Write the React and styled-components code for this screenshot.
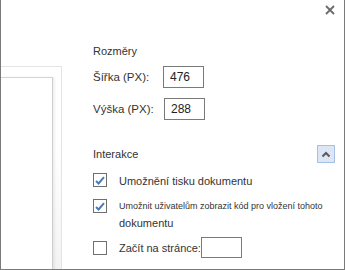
import React from 'react';
import styled, { createGlobalStyle } from 'styled-components';

const GlobalStyle = createGlobalStyle`
    html, body {
        margin: 0;
        padding: 0;
        background: #fff;
    }
    body {
        font-family: "Liberation Sans", Arial, sans-serif;
        color: #333;
    }
`;

const Window = styled.div`
    position: relative;
    width: 345px;
    height: 270px;
    box-sizing: border-box;
    border: 1px solid #7a7a7a;
    border-top: none;
    background: #fff;
    display: flex;
    overflow: hidden;
`;

const CloseButton = styled.button`
    position: absolute;
    top: 4px;
    right: 8px;
    width: 12px;
    height: 12px;
    padding: 0;
    border: none;
    background: none;
    display: flex;
    align-items: center;
    justify-content: center;
`;

const Preview = styled.div`
    width: 60px;
    margin-top: 66px;
    border-top: 1px solid #e4e4e4;
    border-right: 1px solid #e4e4e4;
    background: linear-gradient(to bottom, #fff 0%, #fff 40%, #f3f3f3 100%);
`;

const PreviewPage = styled.div`
    height: 100%;
    margin-top: 10px;
    margin-right: 8px;
    background: #fff;
    border-top: 1px solid #d4d4d4;
    border-right: 1px solid #cfcfcf;
    box-shadow: 2px 0 2px rgba(0, 0, 0, 0.06);
`;

const Settings = styled.div`
    flex: 1;
    margin-left: 31px;
    padding-top: 44px;
    padding-right: 9px;
    display: flex;
    flex-direction: column;
    font-size: 11px;
`;

const SectionTitle = styled.div`
    height: 14px;
    line-height: 14px;
    color: #333;
`;

const FieldRow = styled.label`
    display: flex;
    align-items: center;
    height: 22px;
    margin-top: ${p => p.$top}px;
    font-size: 11.5px;
    color: #333;
`;

const FieldLabel = styled.span`
    width: ${p => p.$width}px;
`;

const NumberInput = styled.input`
    box-sizing: border-box;
    width: ${p => p.$width || 41}px;
    height: ${p => p.$height || 22}px;
    border: 1px solid #7a7a7a;
    padding: 0 0 0 6px;
    font-family: "Liberation Sans", Arial, sans-serif;
    font-size: 12px;
    color: #222;
    background: #fff;
    outline: none;
`;

const SectionHeader = styled.div`
    display: flex;
    align-items: center;
    justify-content: space-between;
    height: 18px;
    margin-top: 25px;
`;

const CollapseButton = styled.button`
    box-sizing: border-box;
    width: 18px;
    height: 18px;
    padding: 0;
    background: #dce6f5;
    border: 1px solid #a6bfe4;
    display: flex;
    align-items: center;
    justify-content: center;
`;

const CheckRow = styled.div`
    display: flex;
    align-items: flex-start;
    margin-top: ${p => p.$top}px;
`;

const Box = styled.span`
    box-sizing: border-box;
    flex: none;
    width: 14px;
    height: 14px;
    border: 1px solid #707070;
    background: #fff;
    display: flex;
    align-items: center;
    justify-content: center;
`;

const CheckLabel = styled.div`
    margin-left: 12px;
    color: #333;
    font-size: 11px;
    line-height: 14px;
    margin-top: ${p => p.$shift || 0}px;
`;

const SmallLine = styled.div`
    font-size: 9px;
    line-height: 12px;
`;

const WrappedLine = styled.div`
    margin-top: 4px;
`;

const InlineRow = styled.div`
    display: flex;
    align-items: center;
    margin-top: -4px;
`;

function Check({ checked }) {
    return (
        <Box>
            {checked && (
                <svg width="10" height="9" viewBox="0 0 10 9">
                    <path d="M1 5 L3.6 7.5 L9 1.2" fill="none" stroke="#4a7bb8" strokeWidth="2" />
                </svg>
            )}
        </Box>
    );
}

export default function App() {
    return (
        <>
            <GlobalStyle />
            <Window>
                <CloseButton aria-label="Zavřít">
                    <svg width="10" height="10" viewBox="0 0 10 10">
                        <path d="M1 1 L9 9 M9 1 L1 9" stroke="#6a6a6a" strokeWidth="1.8" />
                    </svg>
                </CloseButton>

                <Preview>
                    <PreviewPage />
                </Preview>

                <Settings>
                    <SectionTitle>Rozměry</SectionTitle>
                    <FieldRow $top={8}>
                        <FieldLabel $width={70}>Šířka (PX):</FieldLabel>
                        <NumberInput defaultValue="476" />
                    </FieldRow>
                    <FieldRow $top={10}>
                        <FieldLabel $width={71}>Výška (PX):</FieldLabel>
                        <NumberInput defaultValue="288" />
                    </FieldRow>

                    <SectionHeader>
                        <SectionTitle>Interakce</SectionTitle>
                        <CollapseButton aria-label="Sbalit">
                            <svg width="10" height="7" viewBox="0 0 10 7">
                                <path d="M1.5 5.5 L5 2 L8.5 5.5" fill="none" stroke="#5a5a5a" strokeWidth="2" />
                            </svg>
                        </CollapseButton>
                    </SectionHeader>

                    <CheckRow $top={10}>
                        <Check checked />
                        <CheckLabel $shift={1}>Umožnění tisku dokumentu</CheckLabel>
                    </CheckRow>

                    <CheckRow $top={11}>
                        <Check checked />
                        <CheckLabel $shift={1}>
                            <SmallLine>Umožnit uživatelům zobrazit kód pro vložení tohoto</SmallLine>
                            <WrappedLine>dokumentu</WrappedLine>
                        </CheckLabel>
                    </CheckRow>

                    <CheckRow $top={11}>
                        <Check />
                        <CheckLabel>
                            <InlineRow>
                                Začít na stránce:
                                <NumberInput $width={41} $height={21} />
                            </InlineRow>
                        </CheckLabel>
                    </CheckRow>
                </Settings>
            </Window>
        </>
    );
}
